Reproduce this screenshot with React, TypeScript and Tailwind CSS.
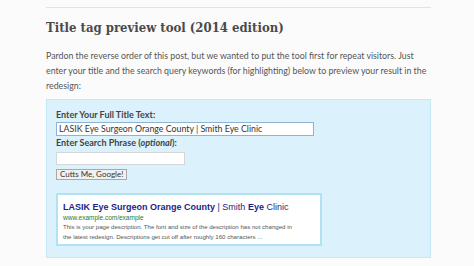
export default function App() {
  return (
    <div className="w-[474px] h-[266px] overflow-hidden bg-[#fbfbfb]">
      <div className="ml-[46px] w-[385px] pt-[7px]">
        <div className="border-t border-[#e3e3e3]" />
        <h2
          className="mt-[10px] text-[13px] leading-[20px] font-bold text-[#4a4a4a]"
          style={{ fontFamily: '"DejaVu Serif", serif', fontStretch: 'condensed' }}
        >
          Title tag preview tool (2014 edition)
        </h2>
        <p
          className="mt-[10px] text-[8.8px] leading-[15px] text-[#555] whitespace-nowrap"
          style={{ fontFamily: 'Lato, "Open Sans", sans-serif' }}
        >
          Pardon the reverse order of this post, but we wanted to put the tool first for repeat visitors. Just
          <br />
          enter your title and the search query keywords (for highlighting) below to preview your result in the
          <br />
          redesign:
        </p>
        <div
          className="mt-[6px] h-[159px] border border-[#c4e8f5] bg-[#dbf2fc] pl-[9px] pt-[8px]"
          style={{ fontFamily: 'Lato, "Open Sans", sans-serif' }}
        >
          <div className="text-[9px] leading-[14px] font-bold text-[#444]">Enter Your Full Title Text:</div>
          <div className="w-[258px] h-[14px] border border-[#8fb3d0] bg-white px-[2px] text-[8.8px] leading-[12px] text-[#333]">
            LASIK Eye Surgeon Orange County | Smith Eye Clinic
          </div>
          <div className="text-[9px] leading-[14px] font-bold text-[#444]">
            Enter Search Phrase (<i>optional</i>):
          </div>
          <div className="mt-[2px] w-[129px] h-[13px] border border-[#d6d6d6] bg-white" />
          <div className="mt-[4px] w-fit h-[11px] border border-[#a8a8a8] bg-[#f0f0f0] px-[3px] text-[8px] leading-[9px] text-[#333]">
            Cutts Me, Google!
          </div>
          <div
            className="mt-[13px] w-[266px] h-[53px] border-2 border-[#b2e1f0] bg-white pl-[5px] pt-[6px]"
            style={{ fontFamily: '"Liberation Sans", Arial, sans-serif' }}
          >
            <div className="text-[9px] leading-[12px] text-[#1f1d84] whitespace-nowrap">
              <b>LASIK Eye Surgeon Orange County</b> | Smith <b>Eye</b> Clinic
            </div>
            <div className="text-[6.5px] leading-[9px] text-[#2b7a2e]">www.example.com/example</div>
            <div className="text-[6.1px] leading-[10px] text-[#555] whitespace-nowrap">
              This is your page description. The font and size of the description has not changed in
              <br />
              the latest redesign. Descriptions get cut off after roughly 160 characters ...
            </div>
          </div>
        </div>
      </div>
    </div>
  );
}
